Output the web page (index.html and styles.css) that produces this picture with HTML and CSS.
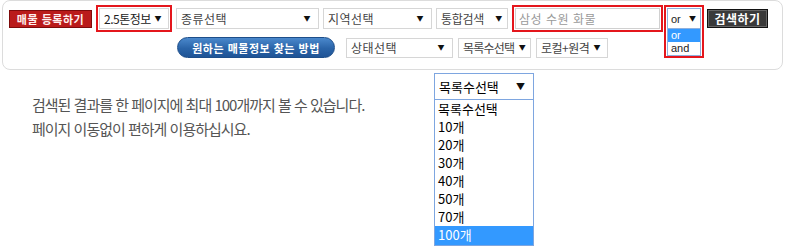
FILE: index.html
```html
<!DOCTYPE html>
<html lang="ko">
<head>
  <meta charset="UTF-8">
  <meta name="viewport" content="width=device-width, initial-scale=1.0">
  <title>매물 검색</title>
  <link rel="stylesheet" href="styles.css">
</head>
<body>

  <div class="search-panel">
    <!-- 첫째 줄 -->
    <div class="search-row">
      <button class="btn-register">매물 등록하기</button>

      <div class="mark">
        <div class="select select--grade">2.5톤정보<span class="arrow">▼</span></div>
      </div>

      <div class="select select--type">종류선택<span class="arrow">▼</span></div>
      <div class="select select--area">지역선택<span class="arrow">▼</span></div>
      <div class="select select--scope">통합검색<span class="arrow">▼</span></div>

      <div class="search-group">
        <div class="mark">
          <div class="keyword">삼성 수원 화물</div>
        </div>
        <div class="mark mark--open">
          <div class="select select--mode is-focus">or<span class="arrow">▼</span></div>
          <ul class="mini-options">
            <li class="is-active">or</li>
            <li>and</li>
          </ul>
        </div>
      </div>

      <button class="btn-search">검색하기</button>
    </div>

    <!-- 둘째 줄 -->
    <div class="search-row search-row--sub">
      <button class="btn-guide">원하는 매물정보 찾는 방법</button>
      <div class="sub-selects">
        <div class="select select--status">상태선택<span class="arrow">▼</span></div>
        <div class="select select--count">목록수선택<span class="arrow">▼</span></div>
        <div class="select select--source">로컬+원격<span class="arrow">▼</span></div>
      </div>
    </div>
  </div>

  <div class="info">
    <p class="info-text">
      검색된 결과를 한 페이지에 최대 100개까지 볼 수 있습니다.<br>
      페이지 이동없이 편하게 이용하십시요.
    </p>

    <div class="picker">
      <div class="picker-head">목록수선택<span class="arrow">▼</span></div>
      <ul class="picker-list">
        <li>목록수선택</li>
        <li>10개</li>
        <li>20개</li>
        <li>30개</li>
        <li>40개</li>
        <li>50개</li>
        <li>70개</li>
        <li class="is-active">100개</li>
      </ul>
    </div>
  </div>

</body>
</html>
```

FILE: styles.css
```css
body {
  margin: 0;
  padding: 0;
  background-color: #FFF;
  font-family: "Noto Sans CJK KR", "Noto Sans", sans-serif;
  color: #333;
}

ul {
  list-style: none;
  margin: 0;
  padding: 0;
}

button {
  font-family: inherit;
  cursor: pointer;
  padding: 0;
  white-space: nowrap;
}

.search-panel {
  margin: 0 2px;
  height: 70px;
  box-sizing: border-box;
  border: 1px solid #DCDCDC;
  border-radius: 8px;
  padding: 4px 0 0 6px;
}

.search-row {
  display: flex;
  align-items: center;
  gap: 4px;
  height: 27px;
}

.search-row--sub {
  margin-top: 5px;
  height: 21px;
  padding-left: 168px;
  gap: 11px;
}

.sub-selects {
  display: flex;
  gap: 5px;
}

.select {
  display: flex;
  align-items: center;
  justify-content: space-between;
  box-sizing: border-box;
  height: 21px;
  padding: 0 7px 0 4px;
  border: 1px solid #D6D6D6;
  background-color: #FFF;
  font-size: 12px;
  line-height: 14px;
  color: #444;
  white-space: nowrap;
  overflow: hidden;
}

.arrow {
  font-family: "Noto Sans CJK KR", sans-serif;
  font-size: 7px;
  line-height: 7px;
  color: #111;
}

.select--grade { width: 70px; color: #222; letter-spacing: -0.5px; }
.select--type { width: 143px; letter-spacing: 0.5px; }
.select--area { width: 109px; letter-spacing: 0.5px; }
.select--scope { width: 72px; letter-spacing: -0.3px; padding-right: 5px; }
.select--status { width: 107px; height: 20px; letter-spacing: 0.5px; }
.select--count { width: 73px; height: 20px; letter-spacing: -0.8px; padding-right: 5px; }
.select--source { width: 72px; height: 20px; letter-spacing: -0.5px; }

.select--mode {
  width: 34px;
  padding: 0 4px 0 3px;
  color: #222;
  font-family: "Liberation Sans", Arial, sans-serif;
  font-size: 11px;
}

.is-focus {
  border-color: #8FB0DD;
}

.mark {
  border: 2px solid #E4161C;
  padding: 1px;
}

.search-group {
  display: flex;
  gap: 1px;
}

.mark--open {
  align-self: flex-start;
  margin-bottom: -28px;
  padding-bottom: 0;
}

.keyword {
  box-sizing: border-box;
  width: 145px;
  height: 21px;
  padding: 0 3px;
  border: 1px solid #D0D0D0;
  font-size: 12px;
  line-height: 19px;
  color: #9A9A9A;
  letter-spacing: 0.5px;
  white-space: nowrap;
}

.mini-options {
  width: 34px;
  box-sizing: border-box;
  border: 1px solid #8FB0DD;
  border-top: none;
  font-family: "Liberation Sans", Arial, sans-serif;
  font-size: 11px;
  color: #222;
}

.mini-options li {
  height: 13px;
  line-height: 13px;
  padding-left: 3px;
}

.mini-options .is-active {
  background-color: #3399FF;
  color: #FFF;
}

.btn-register {
  width: 83px;
  height: 18px;
  border: 1px solid #7E0B0B;
  background-color: #BA1B1B;
  color: #FFF0F0;
  font-size: 11px;
  font-weight: bold;
  letter-spacing: 0.5px;
}

.btn-search {
  width: 61px;
  height: 19px;
  margin-left: -1px;
  border: 1px solid #111;
  box-shadow: inset 0 0 0 1px #666;
  background-color: #3A3A3A;
  color: #FFF;
  font-size: 12px;
  font-weight: bold;
  letter-spacing: 0.5px;
}

.btn-guide {
  width: 158px;
  height: 21px;
  border: 1px solid #1D4E8A;
  border-radius: 11px;
  background: linear-gradient(#4A88CC, #2A64A8 55%, #1F5496);
  color: #FFF;
  font-size: 11px;
  font-weight: bold;
  letter-spacing: 0.5px;
}

.info {
  display: flex;
  padding: 3px 0 0 32px;
}

.info-text {
  width: 402px;
  margin: 20px 0 0;
  font-size: 15px;
  line-height: 24px;
  letter-spacing: -1px;
  color: #555;
}

.picker {
  width: 100px;
  font-size: 13px;
  color: #000;
}

.picker-head {
  display: flex;
  align-items: center;
  justify-content: space-between;
  box-sizing: border-box;
  height: 27px;
  padding: 0 8px 0 4px;
  border: 1px solid #7EA6E0;
  line-height: 16px;
}

.picker-head .arrow {
  font-size: 9px;
  line-height: 9px;
}

.picker-list {
  border: 1px solid #7EA6E0;
  border-top: none;
}

.picker-list li {
  height: 18px;
  line-height: 18px;
  padding-left: 3px;
  overflow: hidden;
}

.picker-list li:last-child {
  height: 19px;
}

.picker-list .is-active {
  background-color: #3399FF;
  color: #FFF;
}
```
